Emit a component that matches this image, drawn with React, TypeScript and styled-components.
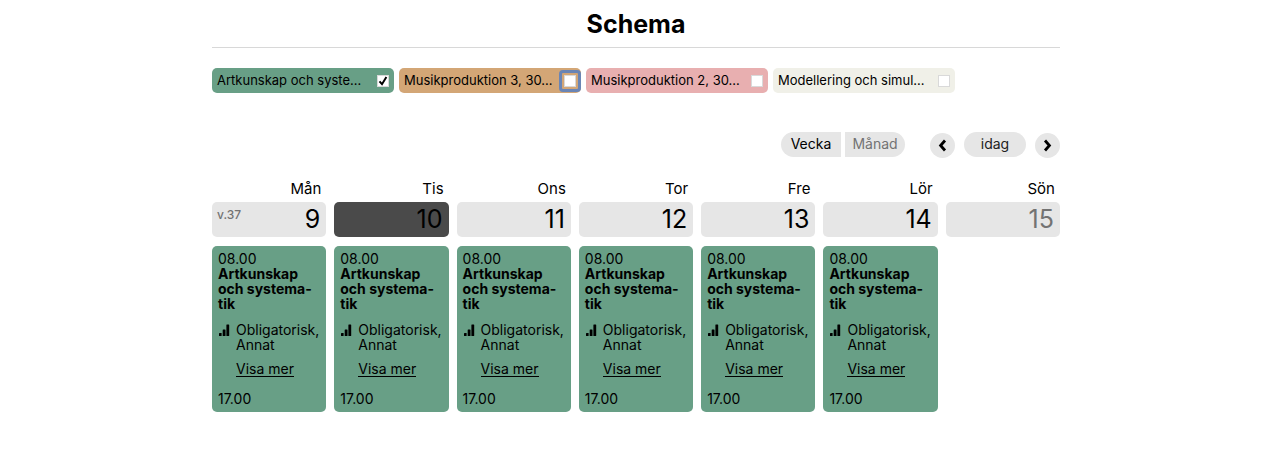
import React, { useState } from "react";
import styled, { createGlobalStyle } from "styled-components";

const GlobalStyle = createGlobalStyle`
  *, *::before, *::after { box-sizing: border-box; }
  body {
    margin: 0;
    background: #fff;
    color: #000;
    font: 14px/15px Inter, "Liberation Sans", sans-serif;
  }
  button, input { font: inherit; color: inherit; margin: 0; }
`;

const Page = styled.main`
  max-width: 848px;
  margin: 0 auto;
`;

const Title = styled.h1`
  margin: 0;
  height: 48px;
  border-bottom: 1px solid #d8d8d8;
  font-size: 25px;
  line-height: 48px;
  font-weight: 700;
  text-align: center;
`;

const Filters = styled.div`
  display: flex;
  flex-wrap: wrap;
  gap: 5px;
  margin-top: 20px;
`;

const FilterChip = styled.label<{ $color: string }>`
  display: flex;
  align-items: center;
  justify-content: space-between;
  width: 182px;
  height: 25px;
  padding: 0 5px;
  border-radius: 5px;
  background: ${(p) => p.$color};
  font-size: 13px;
  white-space: nowrap;
`;

const CheckHolder = styled.span<{ $ring: boolean }>`
  position: relative;
  display: grid;
  place-items: center;
  width: 12px;
  height: 12px;

  > * { grid-area: 1 / 1; }

  &::after {
    content: "";
    display: ${(p) => (p.$ring ? "block" : "none")};
    position: absolute;
    inset: -5px;
    border: 3px solid #6a85b5;
    border-radius: 4px;
    pointer-events: none;
  }
`;

const Checkbox = styled.input`
  appearance: none;
  width: 12px;
  height: 12px;
  border: 1px solid #d9d9d9;
  background: #fff;
  outline: none;
`;

const CheckMark = styled.svg`
  width: 10px;
  height: 10px;
  pointer-events: none;
`;

const Toolbar = styled.div`
  display: flex;
  justify-content: flex-end;
  align-items: flex-start;
  margin-top: 39px;
`;

const ViewSwitch = styled.div`
  display: flex;
  gap: 4px;
  margin-right: 25px;
`;

const PillButton = styled.button`
  height: 25px;
  padding: 0 0 2px;
  border: 0;
  background: #e6e6e6;
`;

const ViewButton = styled(PillButton)<{ $side: "left" | "right"; $active: boolean }>`
  width: 60px;
  border-radius: ${(p) => (p.$side === "left" ? "13px 0 0 13px" : "0 13px 13px 0")};
  color: ${(p) => (p.$active ? "#000" : "#737373")};
`;

const Pager = styled.div`
  display: flex;
  align-items: flex-start;
  gap: 9px;
`;

const ArrowButton = styled.button`
  display: grid;
  place-items: center;
  width: 25px;
  height: 25px;
  margin-top: 1px;
  padding: 0;
  border: 0;
  border-radius: 50%;
  background: #e6e6e6;
`;

const TodayButton = styled(PillButton)`
  width: 62px;
  border-radius: 13px;
  color: #222;
`;

const Week = styled.div`
  display: grid;
  grid-template-columns: repeat(7, minmax(0, 1fr));
  gap: 8px;
  margin-top: 23px;
`;

const DayName = styled.div`
  padding-right: 5px;
  font-size: 15px;
  line-height: 16px;
  text-align: right;
`;

const DayHead = styled.div<{ $today: boolean; $muted: boolean }>`
  display: flex;
  justify-content: space-between;
  height: 35px;
  margin-top: 5px;
  padding: 0 6px 0 5px;
  border-radius: 5px;
  background: ${(p) => (p.$today ? "#4a4a4a" : "#e6e6e6")};
  color: ${(p) => (p.$muted ? "#737373" : "#000")};
`;

const WeekNumber = styled.span`
  color: #737373;
  font-size: 12px;
  font-weight: 500;
  line-height: 26px;
`;

const DayNumber = styled.span`
  margin-left: auto;
  font-size: 25px;
  line-height: 34px;
`;

const EventCard = styled.article`
  margin-top: 9px;
  padding: 5px 6px 6px;
  border-radius: 5px;
  background: #689f86;
`;

const EventTitle = styled.h2`
  margin: 0;
  font-size: 14px;
  line-height: 15px;
  font-weight: 700;
`;

const EventDetail = styled.div`
  display: grid;
  grid-template-columns: 12px minmax(0, 1fr);
  column-gap: 6px;
  margin-top: 11px;
`;

const DetailText = styled.div`
  white-space: nowrap;
`;

const MoreLink = styled.a`
  display: block;
  width: fit-content;
  margin: 10px 0 14px 18px;
  border-bottom: 1px solid #000;
  line-height: 14px;
  color: inherit;
  text-decoration: none;
`;

const courses = [
  { name: "Artkunskap och syste...", color: "#689f86" },
  { name: "Musikproduktion 3, 30...", color: "#d3a676" },
  { name: "Musikproduktion 2, 30...", color: "#e8afb0" },
  { name: "Modellering och simul...", color: "#f0f0e8" },
];

const days = [
  { name: "Mån", date: 9, week: "v.37" },
  { name: "Tis", date: 10, today: true },
  { name: "Ons", date: 11 },
  { name: "Tor", date: 12 },
  { name: "Fre", date: 13 },
  { name: "Lör", date: 14 },
  { name: "Sön", date: 15, free: true },
];

const Arrow = ({ d }: { d: string }) => (
  <svg width="9" height="13" viewBox="0 0 9 13" fill="none" stroke="#000" strokeWidth="2.8" aria-hidden="true">
    <path d={d} />
  </svg>
);

const Bars = () => (
  <svg width="12" height="15" viewBox="0 0 12 15" aria-hidden="true">
    <rect x="1" y="11" width="2.6" height="3" rx=".5" />
    <rect x="4.7" y="7.5" width="2.8" height="6.5" rx=".5" />
    <rect x="8.4" y="2.5" width="2.8" height="11.5" rx=".5" />
  </svg>
);

const Event = () => (
  <EventCard>
    <div>08.00</div>
    <EventTitle>Artkunskap och systema-tik</EventTitle>
    <EventDetail>
      <Bars />
      <DetailText>
        Obligatorisk,
        <br />
        Annat
      </DetailText>
    </EventDetail>
    <MoreLink href="#mer">Visa mer</MoreLink>
    <div>17.00</div>
  </EventCard>
);

export default function App() {
  const [checked, setChecked] = useState([true, false, false, false]);
  const [focused, setFocused] = useState(1);
  const [view, setView] = useState("Vecka");

  const toggle = (i: number) => setChecked(checked.map((c, n) => (n === i ? !c : c)));

  return (
    <Page>
      <GlobalStyle />
      <Title>Schema</Title>
      <Filters>
        {courses.map((c, i) => (
          <FilterChip key={c.name} $color={c.color}>
            {c.name}
            <CheckHolder $ring={focused === i}>
              <Checkbox
                type="checkbox"
                checked={checked[i]}
                onFocus={() => setFocused(i)}
                onChange={() => toggle(i)}
              />
              {checked[i] && (
                <CheckMark viewBox="0 0 10 10" fill="none" stroke="#000" strokeWidth="2" aria-hidden="true">
                  <path d="M1.5 5.4 4 8.2 8.4 1" />
                </CheckMark>
              )}
            </CheckHolder>
          </FilterChip>
        ))}
      </Filters>
      <Toolbar>
        <ViewSwitch>
          <ViewButton $side="left" $active={view === "Vecka"} onClick={() => setView("Vecka")}>
            Vecka
          </ViewButton>
          <ViewButton $side="right" $active={view === "Månad"} onClick={() => setView("Månad")}>
            Månad
          </ViewButton>
        </ViewSwitch>
        <Pager>
          <ArrowButton aria-label="Föregående">
            <Arrow d="M7 1.5 2.6 6.5 7 11.5" />
          </ArrowButton>
          <TodayButton>idag</TodayButton>
          <ArrowButton aria-label="Nästa">
            <Arrow d="M2 1.5 6.4 6.5 2 11.5" />
          </ArrowButton>
        </Pager>
      </Toolbar>
      <Week>
        {days.map((d) => (
          <section key={d.name}>
            <DayName>{d.name}</DayName>
            <DayHead $today={!!d.today} $muted={!!d.free}>
              {d.week && <WeekNumber>{d.week}</WeekNumber>}
              <DayNumber>{d.date}</DayNumber>
            </DayHead>
            {!d.free && <Event />}
          </section>
        ))}
      </Week>
    </Page>
  );
}
